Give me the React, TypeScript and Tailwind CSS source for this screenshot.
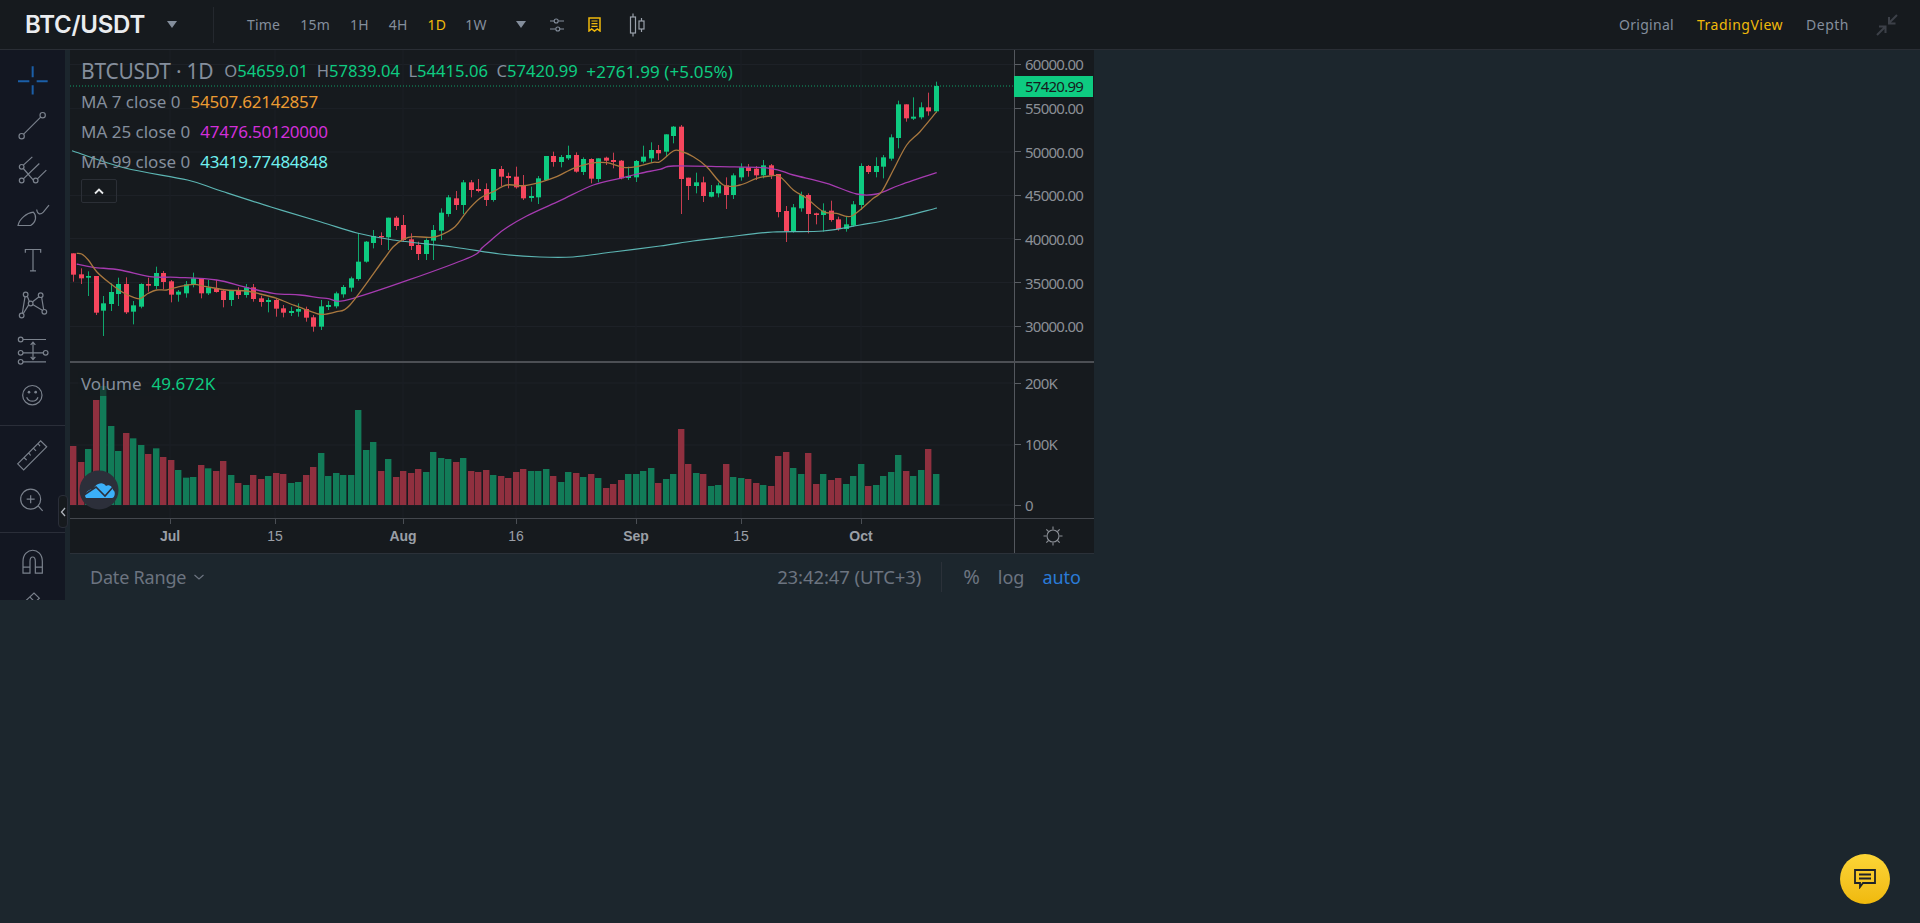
import React from "react";

type C = [number, number, number, number, number];
const A: C[] = [[0,70,134,70,155],[0,133,145,115,162],[1,138,143,124,198],[0,138,248,138,255],[1,220,242,198,318],[1,186,222,160,243],[1,162,192,143,228],[0,162,247,142,252],[1,226,245,213,283],[1,162,230,160,235],[0,162,167,143,185],[1,129,168,110,177],[0,129,156,123,178],[0,154,194,150,217],[1,185,194,180,215],[1,163,190,153,203],[1,145,163,128,172],[0,145,190,145,205],[1,172,190,150,195],[0,175,186,150,188],[0,182,210,180,232],[1,182,210,180,228],[0,183,195,172,207],[1,172,195,162,203],[0,172,207,162,215],[0,205,216,197,230],[1,210,216,203,247],[0,210,236,205,260],[0,235,248,225,262],[1,243,249,230,258],[1,237,245,220,260],[0,237,263,230,275],[0,262,290,255,305],[1,229,290,210,300],[1,225,231,213,240],[1,190,229,185,235],[1,171,193,165,203],[1,145,173,140,185],[1,95,147,9,152]];
const B: C[] = [[1,395,455,393,458],[1,378,399,360,415],[0,378,382,367,405],[1,323,382,323,420],[0,323,348,318,360],[0,345,390,315,395],[0,388,408,370,420],[0,405,432,395,450],[1,390,432,385,450],[1,360,392,345,450],[1,308,362,295,390],[1,262,312,255,320],[0,265,285,243,300],[1,217,285,210,312],[0,217,240,210,262],[0,237,243,207,247],[0,237,270,220,288],[1,177,270,177,275],[0,177,200,168,228],[0,198,204,188,235],[0,200,232,170,236],[0,225,265,195,270],[1,258,264,230,275],[1,205,262,198,282],[1,138,210,138,212],[0,138,156,125,170],[1,141,156,135,172],[1,135,145,107,150],[0,135,185,127,188],[1,147,186,142,195],[0,147,206,145,220],[1,145,207,145,217],[0,143,152,140,165],[0,150,156,128,175],[0,152,205,150,208],[1,198,204,170,210],[1,153,202,150,216],[1,140,155,107,160],[1,120,145,97,158],[0,120,130,105,150]];
const D: C[] = [[1,193,245,193,258],[1,170,198,168,220],[0,170,327,165,432],[0,323,348,323,390],[1,337,348,308,370],[0,337,378,320,396],[1,366,380,345,382],[1,346,370,338,382],[0,346,375,322,417],[1,316,375,310,387],[1,292,322,280,332],[0,292,303,282,320],[0,296,316,288,330],[1,286,316,270,325],[0,286,316,282,327],[0,312,426,312,442],[0,423,485,408,516],[1,412,485,402,488],[1,375,415,365,425],[0,375,432,370,490],[0,430,435,428,463],[1,422,435,400,485],[0,422,450,392,455],[0,448,477,440,482],[1,463,477,438,485],[1,403,467,393,470],[1,288,405,280,420],[0,288,306,285,312],[1,288,306,262,322],[1,262,290,255,325],[1,202,266,193,272],[1,103,204,92,235],[0,103,145,103,155],[1,140,146,82,150],[1,112,142,97,148],[0,112,124,68,137],[1,48,124,35,128]];
const conv = (arr: C[], base: number): C[] => arr.map(([c, a, b, d, e]) => [c, base + a / 3, base + b / 3, base + d / 3, base + e / 3]);
const candles: C[] = [...conv(A, 230), ...conv(B, 110), ...conv(D, 70)];

const volTops = [228,276,237,90,48,168,243,189,205,225,252,235,261,270,300,323,321,285,295,303,273,315,339,345,315,327,318,309,312,339,336,315,291,249,318,309,315,315,120,240,216,303,267,321,303,309,297,306,246,264,267,276,264,303,306,300,315,318,324,306,297,303,303,297,318,336,306,309,321,312,324,354,342,330,312,312,303,294,339,327,312,177,282,309,312,348,345,282,321,324,327,339,345,348,258,246,294,312,249,342,312,330,324,342,318,282,348,345,318,306,255,303,318,300,237,312];

type P = number[];
const map = (arr: P[], x0: number, y0: number): P[] => arr.map(([x, y]) => [x0 + x / 3, y0 + y / 3]);
const smooth = (p: P[]) => {
  let d = `M${p[0][0].toFixed(1)} ${p[0][1].toFixed(1)}`;
  for (let i = 0; i < p.length - 1; i++) {
    const a = p[Math.max(i - 1, 0)], b = p[i], c = p[i + 1], e = p[Math.min(i + 2, p.length - 1)];
    const c1x = b[0] + (c[0] - a[0]) / 6, c1y = b[1] + (c[1] - a[1]) / 6;
    const c2x = c[0] - (e[0] - b[0]) / 6, c2y = c[1] - (e[1] - b[1]) / 6;
    d += `C${c1x.toFixed(1)} ${c1y.toFixed(1)} ${c2x.toFixed(1)} ${c2y.toFixed(1)} ${c[0].toFixed(1)} ${c[1].toFixed(1)}`;
  }
  return d;
};
const ma7 = smooth([
  ...map([[50,70],[65,72],[85,90],[110,125],[150,160],[185,185],[215,200],[240,206],[265,190],[290,180],[320,180],[350,172],[400,163],[440,170],[500,180],[560,183],[600,192],[650,205],[700,225],[740,240],[775,252],[800,252],[830,245],[870,225]], 60, 230),
  ...map([[70,450],[100,410],[130,388],[160,380],[210,382],[240,376],[285,350],[320,305],[360,265],[400,245],[440,225],[490,227],[540,217],[590,200],[640,175],[690,160],[740,158],[790,172],[830,170],[880,157]], 360, 110),
  ...map([[0,275],[40,243],[60,243],[100,260],[140,290],[190,345],[240,345],[290,325],[330,318],[360,320],[400,360],[440,385],[490,425],[530,430],[575,438],[640,385],[665,365],[700,300],[740,225],[780,185],[830,125]], 660, 70),
]);
const ma25 = smooth([
  ...map([[50,102],[100,112],[180,120],[270,140],[350,142],[470,150],[550,170],[640,190],[720,195],[800,205],[880,205]], 60, 230),
  ...map([[310,450],[370,410],[430,360],[500,318],[600,272],[700,225],[780,205],[840,190]], 360, 110),
  ...map([[0,298],[40,288],[180,290],[330,295],[400,315],[500,340],[590,372],[650,372],[720,345],[830,308]], 660, 70),
]);
const ma99 = smooth([[72,150.7],[125,168],[187.5,180],[218,190],[271,207],[321,222],[357,233],[393,240],[453,247],[500,254],[540,257],[573,257],[613,252],[660,246],[693,241],[727,237],[773,232],[823,231],[860,225],[893,219],[937,208]]);

const hGrid = [64.5, 108.4, 152, 195.5, 238.5, 282.5, 326.5];
const vGrid = [170, 275, 403, 516, 636, 741, 861];
const cx = (i: number) => Math.round(73 + 7.5 * i);

function PricePane() {
  return (
    <svg width={944} height={311} viewBox="70 50 944 311" className="block">
      {hGrid.map((y) => <line key={y} x1={70} x2={1014} y1={y} y2={y} stroke="#1d2127" />)}
      {vGrid.map((x) => <line key={x} x1={x} x2={x} y1={50} y2={361} stroke="#1b1f25" />)}
      <line x1={70} x2={1014} y1={86} y2={86} stroke="#0ecb81" strokeOpacity={0.75} strokeDasharray="1 2" />
      {candles.map(([c, t, b, wt, wb], i) => {
        const col = c ? "#0ecb81" : "#f6465d";
        return (
          <g key={i}>
            <rect x={cx(i)} y={wt} width={1} height={wb - wt} fill={col} fillOpacity={0.8} />
            <rect x={cx(i) - 2} y={t} width={5} height={Math.max(b - t, 1)} fill={col} />
          </g>
        );
      })}
      <path d={ma99} fill="none" stroke="#5cb5b3" strokeWidth={1.2} />
      <path d={ma25} fill="none" stroke="#a63bb0" strokeWidth={1.3} />
      <path d={ma7} fill="none" stroke="#a9783f" strokeWidth={1.3} />
    </svg>
  );
}

function VolumePane() {
  return (
    <svg width={944} height={155} viewBox="70 363 944 155" className="block">
      {[383, 445, 505].map((y) => <line key={y} x1={70} x2={1014} y1={y} y2={y} stroke="#1d2127" />)}
      {vGrid.map((x) => <line key={x} x1={x} x2={x} y1={363} y2={518} stroke="#1b1f25" />)}
      {volTops.map((z, i) => {
        const top = 370 + z / 3;
        return <rect key={i} x={cx(i) - 3} y={top} width={6.4} height={505 - top} fill={candles[i][0] ? "#127b58" : "#90303f"} />;
      })}
    </svg>
  );
}

function Tool({ cy, children }: { cy: number; children: React.ReactNode }) {
  return (
    <svg width={65} height={45} viewBox={`0 ${cy - 67.5} 195 135`} fill="none" stroke="#7b828d" strokeWidth={3.6} className="block shrink-0">
      {children}
    </svg>
  );
}

function Toolbar() {
  return (
    <div className="w-[65px] h-[550px] overflow-hidden bg-[#131722] shrink-0 flex flex-col">
      <div className="pt-[8px] h-[376px] border-b border-[#2a2e39] shrink-0">
        <Tool cy={93}>
          <path d="M54 95H88M110 95H143M98 50V83M98 107V135" stroke="#1b5fa8" strokeWidth={6} />
        </Tool>
        <Tool cy={226}>
          <circle cx={65} cy={258} r={8} /><circle cx={128} cy={195} r={8} /><path d="M71 252L122 201" />
        </Tool>
        <Tool cy={363}>
          <circle cx={65} cy={352} r={7} /><circle cx={65} cy={393} r={7} /><circle cx={107} cy={393} r={7} />
          <path d="M70 347L97 322M70 357L100 392M70 388L118 342M112 388L139 362" />
        </Tool>
        <Tool cy={498}>
          <path d="M54 528C58 508 80 490 100 488C110 498 110 516 92 528Z" /><path d="M110 480C112 496 122 496 130 488L147 467" />
        </Tool>
        <Tool cy={633}>
          <path d="M76 610V600H122V610M99 600V664M90 664H108" />
        </Tool>
        <Tool cy={768}>
          <circle cx={77} cy={735} r={7} /><circle cx={122} cy={737} r={7} /><circle cx={92} cy={762} r={7} /><circle cx={65} cy={798} r={7} /><circle cx={133} cy={787} r={7} />
          <path d="M67 791L75 742M82 740L88 756M98 757L117 742M125 744L131 780M127 782L98 765M86 766L70 792" />
        </Tool>
        <Tool cy={63}>
          <circle cx={62} cy={30} r={7} /><circle cx={62} cy={70} r={7} /><circle cx={137} cy={70} r={7} /><circle cx={62} cy={97} r={7} />
          <path d="M69 30H138M69 70H130M69 97H138M99 38V90M92 46L99 38L106 46M92 82L99 90L106 82" />
        </Tool>
        <Tool cy={198}>
          <circle cx={97} cy={197} r={29} /><circle cx={87} cy={188} r={4} fill="#7b828d" stroke="none" /><circle cx={107} cy={188} r={4} fill="#7b828d" stroke="none" /><path d="M80 203C86 219 108 219 114 203" />
        </Tool>
      </div>
      <div className="pt-[7px] h-[107px] border-b border-[#2a2e39] shrink-0">
        <Tool cy={380}>
          <path d="M53 405L122 336L140 354L71 423ZM72 386L80 394M86 372L92 380M100 358L108 366M114 344L120 352" />
        </Tool>
        <Tool cy={514}>
          <circle cx={92} cy={510} r={30} /><path d="M115 531L128 545M80 510H104M92 498V522" />
        </Tool>
      </div>
      <div className="pt-[7px]">
        <Tool cy={698}>
          <path d="M69 730V695C69 650 127 650 127 695V730H106V695C106 677 90 677 90 695V730ZM69 712H90M106 712H127" />
        </Tool>
        <Tool cy={833}>
          <path d="M80 810L102 790L118 805L96 826ZM90 802L100 812" />
        </Tool>
      </div>
    </div>
  );
}

function AxisLabel({ text }: { text: string }) {
  return (
    <div className="h-[22px] flex items-center">
      <span className="w-[6px] h-px bg-[#5a5e64] shrink-0" />
      <span className="ml-[4px]">{text}</span>
    </div>
  );
}

function Legend({ label, value, cls }: { label: string; value: string; cls: string }) {
  return (
    <div className="h-[30px] flex items-center gap-[10px] text-[17px]">
      <span>{label}</span>
      <span className={`${cls} tracking-[-0.25px]`}>{value}</span>
    </div>
  );
}

function Ohlc({ k, v }: { k: string; v: string }) {
  return <span><span className="text-[#848e9c]">{k}</span><span className="text-[#0ecb81]">{v}</span></span>;
}

function Chart() {
  const timeItem = "w-[60px] text-center shrink-0";
  return (
    <div className="ml-[5px] w-[1024px] h-[550px] flex flex-col shrink-0 font-['Noto_Sans',sans-serif]">
      <div className="flex h-[311px] bg-[#161a1e] relative shrink-0">
        <PricePane />
        <div className="w-[80px] border-l border-[#53575d] flex flex-col gap-[21.7px] pt-[3.5px] text-[15px] tracking-[-0.75px] text-[#8b8f96]">
          {["60000.00", "55000.00", "50000.00", "45000.00", "40000.00", "35000.00", "30000.00"].map((t) => <AxisLabel key={t} text={t} />)}
        </div>
        <div className="absolute left-[944px] top-[26px] w-[79px] h-[21px] bg-[#0ecb81] text-[#161a1e] text-[15px] tracking-[-0.75px] flex items-center pl-[11px]">57420.99</div>
        <div className="absolute left-[11px] top-[7px] text-[#848e9c]">
          <div className="h-[30px] flex items-center">
            <span className="text-[21px] tracking-[-0.25px] whitespace-nowrap">BTCUSDT · 1D</span>
            <span className="ml-[11px] flex gap-[8.5px] text-[16.6px] whitespace-nowrap">
              <Ohlc k="O" v="54659.01" /><Ohlc k="H" v="57839.04" /><Ohlc k="L" v="54415.06" /><Ohlc k="C" v="57420.99" />
              <span className="text-[#0ecb81] text-[17px] tracking-[0.1px]">+2761.99 (+5.05%)</span>
            </span>
          </div>
          <Legend label="MA 7 close 0" value="54507.62142857" cls="text-[#eb9a32]" />
          <Legend label="MA 25 close 0" value="47476.50120000" cls="text-[#d22fd8]" />
          <Legend label="MA 99 close 0" value="43419.77484848" cls="text-[#6ff0f0]" />
          <div className="mt-[2px] w-[36px] h-[24px] border border-[#2b2f36] rounded-[2px] flex items-center justify-center">
            <svg width={12} height={8} viewBox="0 0 12 8" fill="none" stroke="#e6e8ea" strokeWidth={1.8}><path d="M2 6.5L6 2.5L10 6.5" /></svg>
          </div>
        </div>
      </div>
      <div className="h-[2px] bg-[#4c4f54] shrink-0" />
      <div className="flex h-[155px] bg-[#161a1e] relative shrink-0">
        <VolumePane />
        <div className="w-[80px] border-l border-[#53575d] flex flex-col gap-[39px] pt-[9px] text-[15px] tracking-[-0.75px] text-[#8b8f96]">
          {["200K", "100K", "0"].map((t) => <AxisLabel key={t} text={t} />)}
        </div>
        <div className="absolute left-[8px] top-[8px] h-[25px] px-[3px] flex items-center gap-[10px] text-[17px] text-[#848e9c] bg-[#161a1e]/60">
          <span>Volume</span><span className="text-[#0ecb81]">49.672K</span>
        </div>
        <svg width={40} height={40} viewBox="0 0 40 40" className="absolute left-[9px] top-[107px]">
          <circle cx={20} cy={20} r={19.5} fill="#2c2f3a" />
          <path d="M6 26C7 21 11 19 14 19C17 13 24 11 27 16C30 14 34 17 34 20C37 21 36 28 33 28H7Z" fill="#3bb0f8" />
          <path d="M5 25L17 17L26 26L34 17" fill="none" stroke="#2c2f3a" strokeWidth={1.6} />
        </svg>
      </div>
      <div className="h-[35px] bg-[#161a1e] border-t border-[#43474d] flex shrink-0 text-[14px] text-[#9a9fa6] relative">
        <svg width={944} height={6} viewBox="70 0 944 6" className="absolute left-0 top-0">
          {vGrid.map((x) => <line key={x} x1={x + 0.5} x2={x + 0.5} y1={0} y2={5} stroke="#4a4e54" />)}
        </svg>
        <div className="w-[944px] flex items-center font-['Liberation_Sans',sans-serif]">
          <span className={`${timeItem} ml-[70px] font-bold`}>Jul</span>
          <span className={`${timeItem} ml-[45px]`}>15</span>
          <span className={`${timeItem} ml-[68px] font-bold`}>Aug</span>
          <span className={`${timeItem} ml-[53px]`}>16</span>
          <span className={`${timeItem} ml-[60px] font-bold`}>Sep</span>
          <span className={`${timeItem} ml-[45px]`}>15</span>
          <span className={`${timeItem} ml-[60px] font-bold`}>Oct</span>
        </div>
        <div className="w-[80px] border-l border-[#53575d] flex items-center justify-center pr-[4px]">
          <svg width={22} height={22} viewBox="0 0 22 22" fill="none" stroke="#8b8f96" strokeWidth={1.1}>
            <circle cx={11} cy={11} r={6} /><path d="M11 1.5V4.5M11 17.5V20.5M1.5 11H4.5M17.5 11H20.5M4.3 4.3L6.5 6.5M15.5 15.5L17.7 17.7M4.3 17.7L6.5 15.5M15.5 6.5L17.7 4.3" />
          </svg>
        </div>
      </div>
      <div className="h-[47px] border-t border-[#2b3139] flex items-center text-[18px] text-[#6c7480] shrink-0">
        <span className="ml-[20px] tracking-[-0.2px]">Date Range</span>
        <svg width={12} height={8} viewBox="0 0 12 8" fill="none" stroke="#6c7480" strokeWidth={1.2} className="ml-[7px]"><path d="M1.5 2L6 6L10.5 2" /></svg>
        <span className="ml-auto text-[18.5px] tracking-[-0.1px]">23:42:47 (UTC+3)</span>
        <span className="ml-[20px] w-px h-[30px] bg-[#2b3139]" />
        <span className="ml-[21px] text-[20px]">%</span>
        <span className="ml-[18px]">log</span>
        <span className="ml-[18px] mr-[13px] text-[#2a7bd8]">auto</span>
      </div>
    </div>
  );
}

function TopBar() {
  return (
    <div className="h-[50px] bg-[#161a1e] border-b border-[#2a2e35] flex items-center text-[14px] tracking-[0.2px] text-[#848e9c] font-['Noto_Sans',sans-serif] shrink-0">
      <span className="ml-[25px] text-[24px] font-semibold text-[#eaecef] tracking-[-0.25px] font-['Inter',sans-serif]">BTC/USDT</span>
      <svg width={10} height={8} viewBox="0 0 10 8" className="ml-[22px]"><path d="M0 0H10L5 7Z" fill="#848e9c" /></svg>
      <span className="ml-[36px] w-px h-[36px] bg-[#24282e]" />
      <span className="ml-[33px] shrink-0">Time</span>
      <span className="ml-[20px] shrink-0">15m</span>
      <span className="ml-[20px] shrink-0">1H</span>
      <span className="ml-[20px] shrink-0">4H</span>
      <span className="ml-[20px] shrink-0 text-[#f0b90b]">1D</span>
      <span className="ml-[19px] shrink-0">1W</span>
      <svg width={10} height={8} viewBox="0 0 10 8" className="ml-[29px]"><path d="M0 0H10L5 7Z" fill="#848e9c" /></svg>
      <svg width={16} height={14} viewBox="0 0 16 14" fill="none" stroke="#848e9c" strokeWidth={1.1} className="ml-[23px]">
        <path d="M1 3H5M9.5 3H15M1 11H6.5M11 11H15" /><circle cx={7.2} cy={3} r={2} /><circle cx={8.8} cy={11} r={2} />
      </svg>
      <svg width={13} height={15} viewBox="0 0 13 15" fill="none" stroke="#f0b90b" strokeWidth={1.5} className="ml-[23px]">
        <path d="M1 1H12V14L9.3 12L6.5 14L3.7 12L1 14Z" /><path d="M3.5 4H9.5M3.5 6.7H9.5M3.5 9.4H9.5" strokeWidth={1.2} />
      </svg>
      <svg width={18} height={24} viewBox="0 0 18 24" fill="none" stroke="#9aa1ab" strokeWidth={1.2} className="ml-[27px]">
        <path d="M5 0.5V4M5 20V23.5M13.5 5V8M13.5 16V19" /><rect x={2.5} y={4} width={5} height={16} /><rect x={11} y={8} width={5} height={8} />
      </svg>
      <span className="ml-auto shrink-0 tracking-[0.3px]">Original</span>
      <span className="ml-[23px] shrink-0 text-[#f0b90b] tracking-[0.5px]">TradingView</span>
      <span className="ml-[23px] shrink-0 tracking-[0.5px]">Depth</span>
      <svg width={22} height={22} viewBox="0 0 22 22" fill="none" stroke="#3c4048" strokeWidth={2} className="ml-[27px] mr-[22px]">
        <path d="M1 21L9 13M3 12.5H9.5V19M21 1L13 9M13 3V9.5H19.5" />
      </svg>
    </div>
  );
}

export default function App() {
  return (
    <div className="min-h-screen h-[923px] bg-[#1c262d] flex flex-col relative overflow-hidden">
      <TopBar />
      <div className="flex relative">
        <Toolbar />
        <Chart />
        <div className="absolute left-[58px] top-[445px] w-[10px] h-[33px] rounded-[4px] bg-[#161a1e] border border-[#2a2e39] flex items-center justify-center">
          <svg width={6} height={10} viewBox="0 0 6 10" fill="none" stroke="#b0b5bc" strokeWidth={1.3}><path d="M5 1L1.5 5L5 9" /></svg>
        </div>
      </div>
      <div className="absolute left-[1840px] top-[854px] w-[50px] h-[50px] rounded-full bg-gradient-to-b from-[#fcd535] to-[#f0b90b] flex items-center justify-center">
        <svg width={22} height={20} viewBox="0 0 22 20" fill="none" stroke="#1e2329" strokeWidth={1.8}>
          <path d="M1 1H21V14H9L6 18V14H1Z" /><path d="M5 5.5H17M5 9.5H17" />
        </svg>
      </div>
    </div>
  );
}
